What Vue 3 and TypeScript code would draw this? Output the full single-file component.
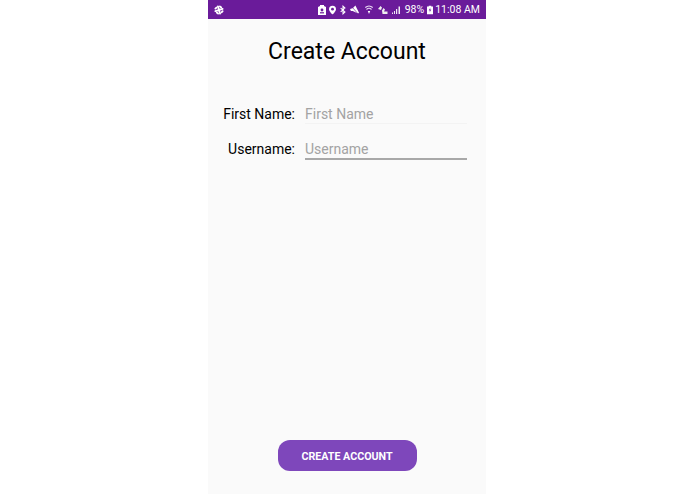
<script setup lang="ts">
const fields = [
  { label: 'First Name:', hint: 'First Name', active: false },
  { label: 'Username:', hint: 'Username', active: true },
]
</script>

<template>
  <div class="stage">
    <div class="phone">
      <div class="status">
        <svg class="slack" width="10" height="10" viewBox="0 0 11 11"><g fill="none" stroke="#fff" stroke-width="2" stroke-linecap="round"><path d="M1.500 6.800L4.300 5.800M4.300 1.500l1 3M9.500 4.200L6.700 5.200M6.700 9.500l-1-3" /><path d="M6.500 1.500l1.500 1.200M9.500 6.800L8.300 8M1.500 4l1.200-1.200M4.500 9.500L3 8.300" /></g></svg>
        <div class="status-right">
          <svg class="i-sim" width="8" height="10" viewBox="0 0 8 10"><path d="M2 0h4v1l2 1v8H0V2l2-1z" fill="#fff" /><circle cx="4" cy="5" r="1.400" fill="#6a1b9a" /><rect x="2" y="7.200" width="4" height="1.200" fill="#6a1b9a" /></svg>
          <svg class="i-pin" width="7" height="10" viewBox="0 0 8 10"><path d="M4 0a4 4 0 0 1 4 4c0 2.500-4 6-4 6S0 6.500 0 4a4 4 0 0 1 4-4z" fill="#fff" /><circle cx="4" cy="4" r="1.600" fill="#6a1b9a" /></svg>
          <svg class="i-bt" width="6" height="10" viewBox="0 0 7 10"><path d="M.8 2.700l5 4.600L3.500 9.500V.5l2.300 2.200-5 4.600" fill="none" stroke="#fff" stroke-width="1.200" /></svg>
          <svg class="i-mute" width="9" height="10" viewBox="0 0 10 10"><path d="M0 4l3-1 3-3 4 8-1 1-6-3H1z" fill="#fff" /><path d="M1 0l8 9.500" stroke="#6a1b9a" stroke-width=".7" /></svg>
          <svg class="i-wifi" width="8" height="10" viewBox="0 0 8 10"><path d="M.3 2.500a5.500 5.500 0 0 1 7.400 0M1.500 4.500a3.600 3.600 0 0 1 5 0" fill="none" stroke="#e8d8f2" stroke-width="1.100" /><path d="M2.800 6h2.400L4 9z" fill="#fff" /></svg>
          <svg class="i-lte" width="10" height="9" viewBox="0 0 10 9"><path d="M0 4l2.500-3L4 2.500 3 5zM4 5.500L5.500 3 7 4.500 6 6.500h3.500V9H4.500z" fill="#eee" /></svg>
          <svg class="i-sig" width="9" height="9" viewBox="0 0 9 9"><path d="M0 9V7.500h1V9zM2 9V6h1v3zM4 9V4h1.200v5zM6.500 9V1.500H8V9z" fill="#f0e8f5" /></svg>
          <span class="pct">98%</span>
          <svg class="i-bat" width="6" height="10" viewBox="0 0 7 10"><path d="M2 0h3v1h2v9H0V1h2z" fill="#fff" /><path d="M4 2L2 5.500h1.500L3 8l2-3.500H3.500z" fill="#6a1b9a" /></svg>
          <span class="time">11:08 AM</span>
        </div>
      </div>
      <main class="content">
        <h1 class="title">Create Account</h1>
        <div class="form">
          <div v-for="f in fields" :key="f.label" class="row">
            <span class="label">{{ f.label }}</span>
            <div class="input" :class="{ active: f.active }">{{ f.hint }}</div>
          </div>
        </div>
        <button class="cta">CREATE ACCOUNT</button>
      </main>
    </div>
  </div>
</template>

<style>
html, body { margin: 0; background: #fff; }
</style>

<style scoped>
.stage { width: 695px; height: 494px; display: flex; justify-content: center; overflow: hidden; font-family: Roboto, sans-serif; }
.phone { width: 278px; height: 494px; margin-right: 1px; background: #fafafa; display: flex; flex-direction: column; }
.status { height: 19px; flex: none; background: #6a1b9a; display: flex; align-items: center; justify-content: space-between; padding: 0 6px 0 6px; color: #fff; box-sizing: border-box; }
.slack { display: block; }
.status-right { display: flex; align-items: center; font-size: 10.500px; }
.i-sim { margin-right: 3px; }
.i-pin { margin-right: 4px; }
.i-bt { margin-right: 4px; }
.i-mute { margin-right: 6px; }
.i-wifi { margin-right: 5px; }
.i-lte { margin-right: 4px; }
.i-sig { margin-right: 4px; }
.pct { margin-right: 3px; }
.i-bat { margin-right: 2px; }
.content { flex: 1; display: flex; flex-direction: column; align-items: center; }
.title { margin: 18px 0 0; font-size: 23px; line-height: 30px; font-weight: 400; color: #000; }
.form { width: 100%; margin-top: 34px; display: flex; flex-direction: column; gap: 9px; }
.row { display: flex; align-items: flex-start; height: 26px; }
.label { width: 87px; text-align: right; font-size: 14px; line-height: 26px; color: #000; flex: none; }
.input { width: 162px; margin-left: 10px; height: 23px; box-sizing: border-box; font-size: 14px; line-height: 26px; color: #a3a3a3; border-bottom: 1px solid #f3f3f3; }
.input.active { height: 24px; border-bottom: 2px solid #a8a8a8; }
.cta { margin-top: auto; margin-bottom: 23px; width: 139px; height: 31px; border: 0; border-radius: 12px; background: #7e47bb; color: #fff; font: 700 10.700px Roboto, sans-serif; padding: 1px 0 0; }
</style>
